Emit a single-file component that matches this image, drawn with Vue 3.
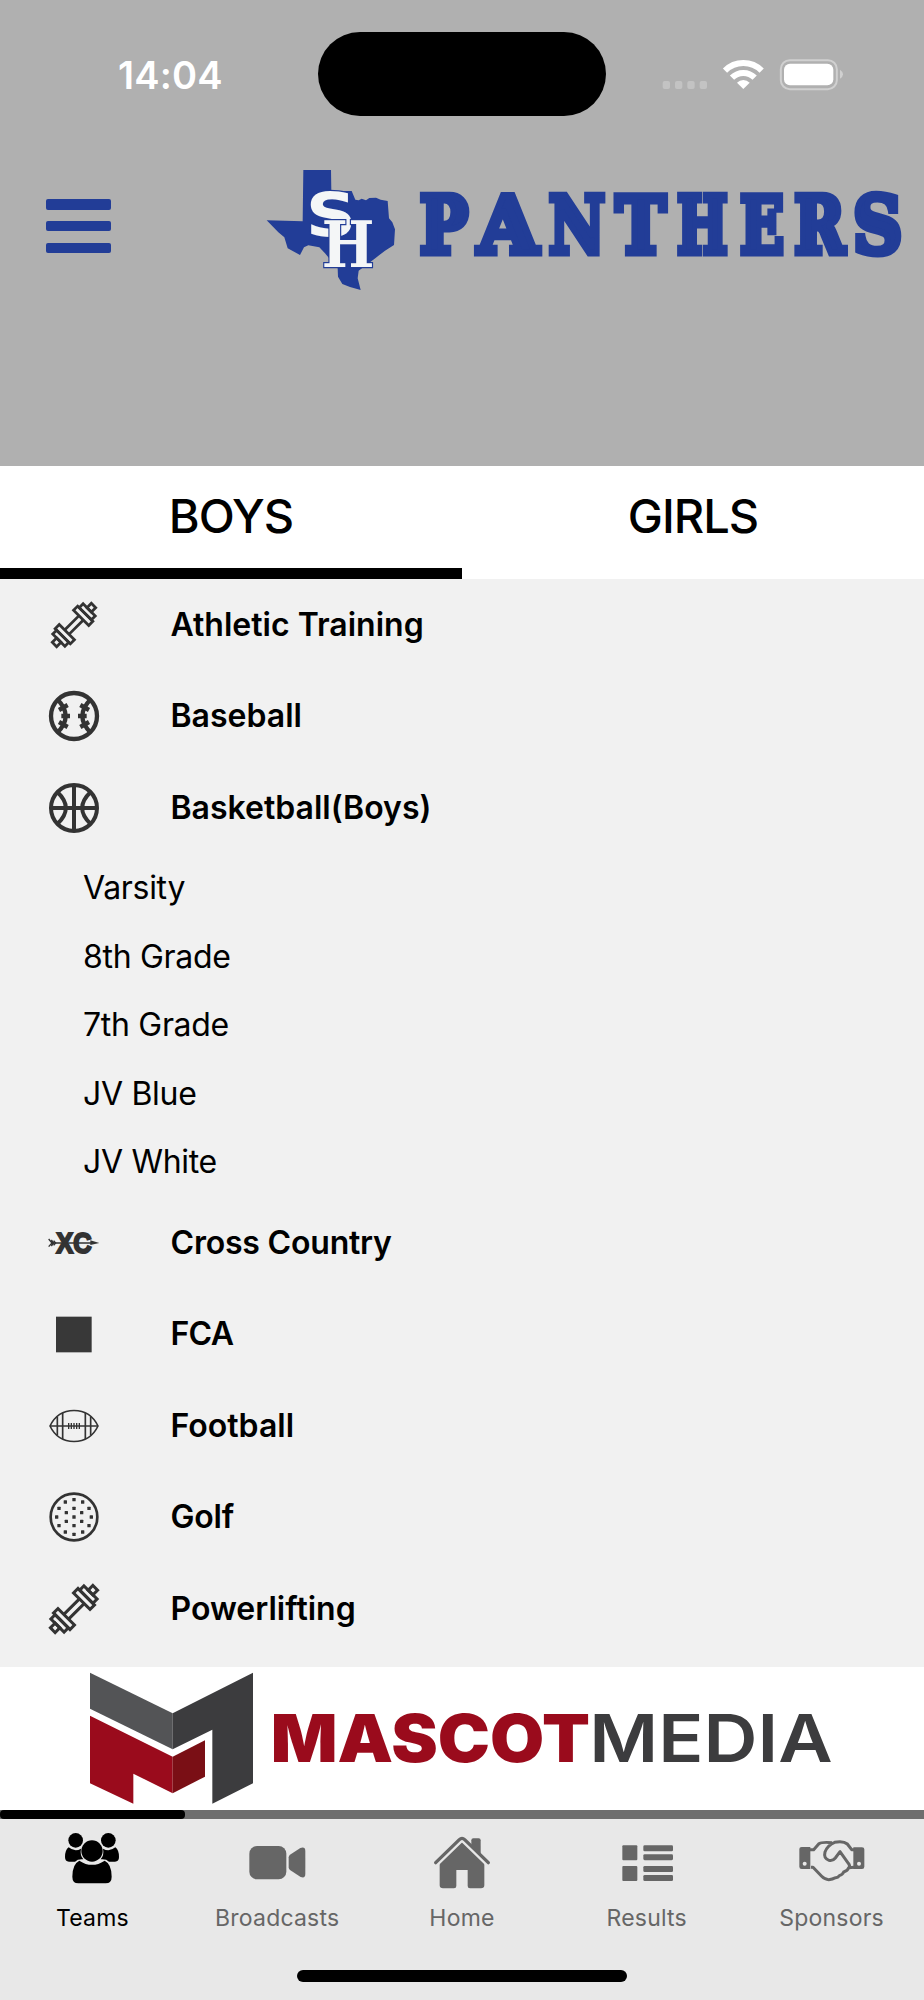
<template>
  <div class="app-root">
    <!-- Status bar + school header -->
    <header class="header">
      <div class="status-bar">
        <span class="time">14:04</span>
        <div class="island"></div>
        <svg class="status-icons" viewBox="0 0 690 270">
          <rect
            v-for="x in [68, 105, 142, 179]"
            :key="x"
            :x="x"
            y="153"
            width="22"
            height="24"
            rx="6"
            fill="#c3c3c3"
          />
          <g fill="none" stroke="#fff" stroke-width="18">
            <path d="M255 122A78 78 0 0 1 365 122" />
            <path d="M276 143A48 48 0 0 1 344 143" />
          </g>
          <path d="M310 177L291 158A27 27 0 0 1 329 158Z" fill="#fff" />
          <rect x="422.500" y="90.500" width="168" height="87" rx="27" fill="none" stroke="#d0d0d0" stroke-width="6" />
          <rect x="432" y="101" width="148" height="65" rx="18" fill="#fff" />
          <path d="M600 119Q609 125 609 133T600 146Z" fill="#d0d0d0" />
        </svg>
      </div>

      <div class="brand-bar">
        <button class="menu-btn" aria-label="Menu">
          <span></span>
          <span></span>
          <span></span>
        </button>
        <svg class="team-logo" viewBox="0 0 2022 480">
          <path
            class="blue"
            d="M160 60H243L244 123H305L316 149L326 151L335 146L348 151L358 144L378 143L392 149L413 153L417 205L427 217L435 238L432 285L405 302L370 329L340 352L326 362L323 385L332 420L300 411L277 402L264 380L263 355L225 310L208 292L175 286L162 292L150 315L113 295L103 262L85 247L50 211L158 214Z"
          />
          <text class="monogram letter-s" x="167" y="259" textLength="152" lengthAdjust="spacingAndGlyphs">S</text>
          <text class="monogram letter-h" x="215" y="352" textLength="158" lengthAdjust="spacingAndGlyphs">H</text>
          <text class="wordmark" y="308"><tspan
            v-for="l in wordmark"
            :key="l.ch"
            :x="l.x"
            :textLength="l.width"
            lengthAdjust="spacingAndGlyphs"
          >{{ l.ch }}</tspan></text>
        </svg>
      </div>
    </header>

    <!-- Boys / girls switch -->
    <div class="gender-tabs">
      <button
        v-for="g in genders"
        :key="g"
        class="gender-tab"
        :class="{ active: g === activeGender }"
        @click="activeGender = g"
      >{{ g }}</button>
    </div>

    <!-- Sports list -->
    <main class="sport-list">
      <div v-for="sport in sports" :key="sport.name">
        <div class="sport-row">
          <svg class="sport-icon" viewBox="0 0 150 150">
            <g v-if="sport.icon === 'dumbbell'" :transform="`translate(75 75) rotate(-45) scale(${sport.scale})`" fill="none" stroke="#333" stroke-width="9">
              <path d="M-32 -10H32M-32 10H32" />
              <rect x="33" y="-35" width="19" height="70" />
              <rect x="52" y="-28" width="18" height="56" />
              <rect x="70" y="-10" width="20" height="20" />
              <rect x="-52" y="-35" width="19" height="70" />
              <rect x="-70" y="-28" width="18" height="56" />
              <rect x="-90" y="-10" width="20" height="20" />
            </g>
            <g v-else-if="sport.icon === 'baseball'" fill="none" stroke="#333" stroke-width="13">
              <circle cx="75" cy="75" r="69" />
              <path d="M24 24Q76 75 24 126M126 24Q74 75 126 126" />
              <path d="M37 75H63M30 57L56 42M30 93L56 108M113 75H87M120 57L94 42M120 93L94 108" />
            </g>
            <g v-else-if="sport.icon === 'basketball'" fill="none" stroke="#333" stroke-width="12">
              <circle cx="75" cy="75" r="69" />
              <path d="M75 5V145M5 75H145M25 27Q76 75 25 123M125 27Q74 75 125 123" />
            </g>
            <g v-else-if="sport.icon === 'xc'" fill="#333">
              <text x="22" y="105" class="xc-text" textLength="106" lengthAdjust="spacingAndGlyphs">XC</text>
              <path d="M6 73H130V77H6ZM124 67L151 75L124 81Z" />
              <path d="M-1 63L9 75L-1 86M7 66L14 75L7 84M14 68L20 75L14 82" fill="none" stroke="#333" stroke-width="4" />
            </g>
            <rect v-else-if="sport.icon === 'square'" x="21" y="23" width="107" height="107" fill="#383838" />
            <g v-else-if="sport.icon === 'football'" fill="none" stroke="#333" stroke-width="5">
              <path d="M3 75Q25 29 75 28.500Q125 29 147 75Q125 121 75 121.500Q25 121 3 75Z" />
              <path d="M3 75H147M25 47V103M41 36V114M109 36V114M125 47V103" />
              <path d="M59 66V84M67 66V84M75 66V84M83 66V84M91 66V84" stroke-width="4" />
            </g>
            <g v-else fill="#333">
              <circle cx="75" cy="75" r="70" fill="none" stroke="#333" stroke-width="8" />
              <rect
                v-for="(d, i) in golfDots"
                :key="i"
                :x="70 + d[0]"
                :y="70 + d[1]"
                width="10"
                height="10"
                rx="1.500"
              />
            </g>
          </svg>
          <span class="sport-name" :style="{ letterSpacing: (sport.spacing || 0) + 'px' }">{{ sport.name }}</span>
        </div>
        <div v-for="team in sport.teams" :key="team" class="team-row">{{ team }}</div>
      </div>
    </main>

    <!-- Sponsor banner -->
    <div class="banner">
      <svg viewBox="0 0 2772 429">
        <g transform="translate(180 -51)">
          <path d="M90 68L338 190V298L90 176Z" fill="#535456" />
          <path d="M338 190L579 68V400L457 461V239L338 298Z" fill="#3c3c3e" />
          <path d="M90 197L338 320V430L220 371V461L90 400Z" fill="#9a0b1c" />
          <path d="M338 320L435 271V380L338 430Z" fill="#7a0f15" />
        </g>
        <text class="mascot" x="812" y="284" textLength="958" lengthAdjust="spacingAndGlyphs">MASCOT</text>
        <text class="media" x="1768" y="284" textLength="730" lengthAdjust="spacingAndGlyphs">MEDIA</text>
      </svg>
    </div>
    <div class="progress"><div class="progress-fill"></div></div>

    <!-- Bottom navigation -->
    <nav class="bottom-nav">
      <div class="nav-items">
        <a v-for="item in navItems" :key="item.label" class="nav-item" :class="{ active: item.label === 'Teams' }">
          <svg class="nav-icon" :viewBox="item.box" fill="currentColor">
            <g v-if="item.label === 'Teams'">
              <circle cx="228" cy="121" r="22" />
              <circle cx="326" cy="121" r="22" />
              <path d="M207 142Q225 157 244 146Q240 165 251 178Q235 176 226 185H208Q196 185 196 171Q196 150 207 142Z" />
              <path d="M347 142Q329 157 310 146Q314 165 303 178Q319 176 328 185H346Q358 185 358 171Q358 150 347 142Z" />
              <circle cx="277" cy="153" r="32" />
              <path d="M239 182Q277 207 315 182Q336 192 336 230Q336 250 318 250H236Q218 250 218 230Q218 192 239 182Z" />
            </g>
            <g v-else-if="item.label === 'Broadcasts'">
              <rect x="749" y="138" width="111" height="100" rx="23" />
              <path d="M867 172Q867 167 871 164L902 144Q917 139 917 153V222Q917 236 903 231L871 210Q867 207 867 202Z" />
            </g>
            <g v-else-if="item.label === 'Home'">
              <path d="M-67 186L0 125L67 186V256Q67 265 57 265H24Q17 265 17 258V210H-17V258Q-17 265 -24 265H-57Q-67 265 -67 256Z" />
              <path d="M-79 188L-8 119Q0 111 8 119L79 188" fill="none" stroke="#e8e8e8" stroke-width="23" />
              <path d="M28 138V121Q28 115 34 115H50Q56 115 56 121V164Z" />
              <path d="M-79 188L-8 119Q0 111 8 119L79 188" fill="none" stroke="currentColor" stroke-width="10" stroke-linecap="round" />
            </g>
            <g v-else-if="item.label === 'Results'">
              <rect x="480" y="136" width="45" height="45" rx="3" />
              <rect x="480" y="198" width="45" height="45" rx="3" />
              <rect v-for="y in [136, 162.5, 198, 225]" :key="y" x="543" :y="y" width="89" height="18" rx="4" />
            </g>
            <g v-else>
              <path d="M1044 141V207H1018Q1011 207 1011 200V147Q1011 141 1018 141ZM1173 142V207H1199Q1206 207 1206 200V148Q1206 142 1199 142Z" />
              <circle cx="1027" cy="191" r="6" fill="#e8e8e8" />
              <circle cx="1190" cy="191" r="6" fill="#e8e8e8" />
              <path
                d="M1042 149H1054L1069 132Q1077 125 1109 128M1046 202H1052L1078 229Q1088 239 1099 239Q1112 238 1117 234Q1128 232 1131 227Q1141 224 1144 216Q1156 213 1159 203L1175 202M1161 205Q1164 197 1158 190L1133 155L1119 174Q1111 184 1100 181Q1083 175 1088 156Q1096 135 1117 127Q1143 122 1155 132L1168 149H1175"
                fill="none"
                stroke="currentColor"
                stroke-width="9"
                stroke-linejoin="round"
              />
            </g>
          </svg>
          <span class="nav-label">{{ item.label }}</span>
        </a>
      </div>
      <div class="home-indicator"></div>
    </nav>
  </div>
</template>

<script setup>
import { ref } from "vue";

const genders = ["BOYS", "GIRLS"];
const activeGender = ref("BOYS");

// every wordmark letter is fitted to its own width
const wordmark = [
  { ch: "P", x: 509, width: 145 },
  { ch: "A", x: 684, width: 180 },
  { ch: "N", x: 896, width: 169 },
  { ch: "T", x: 1097, width: 150 },
  { ch: "H", x: 1281, width: 152 },
  { ch: "E", x: 1470, width: 132 },
  { ch: "R", x: 1633, width: 152 },
  { ch: "S", x: 1809, width: 148 },
];

const sports = [
  { name: "Athletic Training", icon: "dumbbell", scale: 0.92 },
  { name: "Baseball", icon: "baseball" },
  {
    name: "Basketball(Boys)",
    icon: "basketball",
    teams: ["Varsity", "8th Grade", "7th Grade", "JV Blue", "JV White"],
  },
  { name: "Cross Country", icon: "xc", spacing: -0.2 },
  { name: "FCA", icon: "square", spacing: -0.7 },
  { name: "Football", icon: "football" },
  { name: "Golf", icon: "golf", spacing: -0.2 },
  { name: "Powerlifting", icon: "dumbbell", scale: 1 },
];

// offsets from the centre of the ball
const golfDots = [
  [0, -52], [-26, -45], [26, -45],
  [-45, -26], [0, -26], [45, -26],
  [-23, -13], [23, -13],
  [-52, 0], [0, 0], [52, 0],
  [-23, 13], [23, 13],
  [-45, 26], [0, 26], [45, 26],
  [-26, 45], [26, 45], [0, 52],
];

const navItems = [
  { label: "Teams", box: "172 90 210 180" },
  { label: "Broadcasts", box: "727 90 210 180" },
  { label: "Home", box: "-105 90 210 180" },
  { label: "Results", box: "449 90 210 180" },
  { label: "Sponsors", box: "1004 90 210 180" },
];
</script>

<style>
body {
  margin: 0;
}
</style>

<style scoped>
.app-root {
  width: 924px;
  height: 2000px;
  display: flex;
  flex-direction: column;
  overflow: hidden;
  background: #f1f1f1;
  font-family: Inter, "Liberation Sans", sans-serif;
  color: #000;
}

svg {
  display: block;
  flex-shrink: 0;
}

button {
  border: none;
  padding: 0;
  background: none;
  font-family: inherit;
  color: inherit;
}

/* Header */
.header {
  height: 466px;
  flex-shrink: 0;
  background: #b0b0b0;
}

.status-bar {
  display: grid;
  grid-template-columns: 318px 288px 318px;
  align-items: center;
  height: 150px;
}

.time {
  padding-left: 118px;
  font-size: 38px;
  font-weight: 600;
  letter-spacing: 0.2px;
  color: #fff;
}

.island {
  height: 84px;
  margin-bottom: 2px;
  border-radius: 42px;
  background: #000;
}

.status-icons {
  width: 230px;
  height: 90px;
  margin-left: 34px;
}

.brand-bar {
  display: flex;
}

.menu-btn {
  width: 65px;
  height: 54px;
  margin: 49px 139px 0 46px;
  display: flex;
  flex-direction: column;
  justify-content: space-between;
}
.menu-btn span {
  width: 100%;
  height: 10.5px;
  border-radius: 2px;
  background: #223d97;
}

.team-logo {
  width: 674px;
  height: 160px;
}

.blue {
  fill: #223d97;
}

.monogram {
  font-weight: 700;
  fill: #f4f6f7;
  stroke: #223d97;
  stroke-width: 8px;
  paint-order: stroke;
}
.letter-s {
  font-family: "DejaVu Sans", sans-serif;
  font-size: 182px;
}
.letter-h {
  font-family: "DejaVu Serif", serif;
  font-size: 189px;
}

.wordmark {
  font-family: "DejaVu Serif", serif;
  font-weight: 700;
  font-size: 234px;
  fill: #223d97;
  stroke: #223d97;
  stroke-width: 21px;
  stroke-linejoin: miter;
  stroke-miterlimit: 2;
}

/* Boys / girls tabs */
.gender-tabs {
  display: flex;
  height: 113px;
  flex-shrink: 0;
  background: #fff;
}

.gender-tab {
  flex: 1;
  box-sizing: border-box;
  padding-bottom: 4px;
  border-bottom: 11.5px solid transparent;
  font-size: 47px;
  font-weight: 500;
  letter-spacing: -1px;
}
.gender-tab.active {
  border-bottom-color: #000;
}

/* Sports list */
.sport-list {
  flex: 1;
}

.sport-row {
  display: flex;
  align-items: center;
  height: 91.6px;
  padding-left: 48.5px;
}

.sport-icon {
  width: 50px;
  height: 50px;
  margin-right: 72px;
  overflow: visible;
}

.sport-name {
  margin-top: -1px;
  font-size: 32px;
  font-weight: 600;
}

.team-row {
  display: flex;
  align-items: center;
  box-sizing: border-box;
  height: 68.6px;
  padding: 0 0 1px 83px;
  font-size: 32px;
  letter-spacing: -0.3px;
}

.xc-text {
  font-family: "Liberation Sans", sans-serif;
  font-weight: 700;
  font-size: 86px;
  stroke: #333;
  stroke-width: 6px;
}

/* Sponsor banner */
.banner {
  height: 143px;
  flex-shrink: 0;
  background: #fff;
}

.mascot,
.media {
  font-family: Inter, sans-serif;
  font-size: 197px;
}
.mascot {
  font-weight: 900;
  fill: #9a0b1c;
}
.media {
  font-weight: 600;
  fill: #3c3c3e;
}

.progress {
  height: 9px;
  flex-shrink: 0;
  background: #6e6e6e;
}
.progress-fill {
  width: 20%;
  height: 100%;
  border-radius: 4px;
  background: #000;
}

/* Bottom navigation */
.bottom-nav {
  height: 181px;
  flex-shrink: 0;
  background: #e8e8e8;
}

.nav-items {
  display: flex;
  height: 151px;
}

.nav-item {
  flex: 1;
  display: flex;
  flex-direction: column;
  align-items: center;
  padding-top: 11px;
  color: #666;
}
.nav-item.active {
  color: #000;
}

.nav-icon {
  width: 70px;
  height: 60px;
}

.nav-label {
  margin-top: 14px;
  font-size: 23px;
  line-height: 28px;
  letter-spacing: 0.2px;
}

.home-indicator {
  width: 330px;
  height: 11.5px;
  margin: 0 auto;
  border-radius: 6px;
  background: #000;
}
</style>
